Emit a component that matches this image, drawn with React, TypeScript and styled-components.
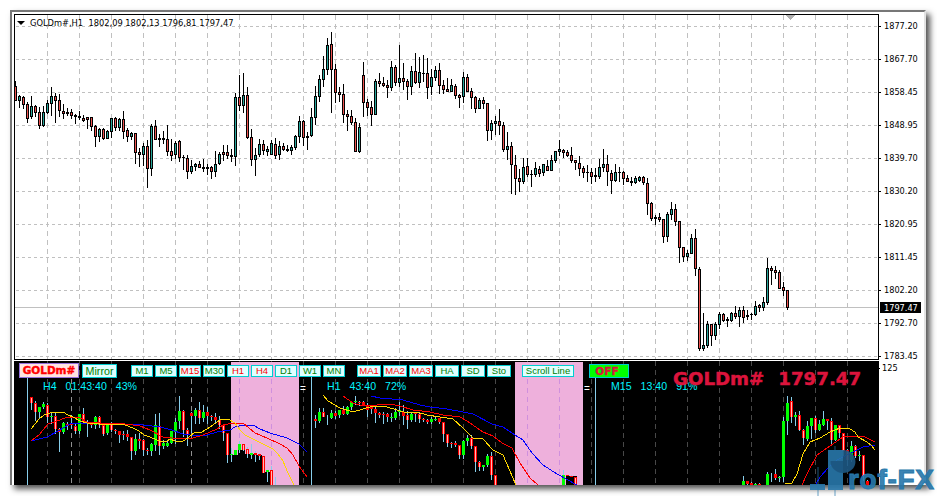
import React from "react";
import styled, { createGlobalStyle } from "styled-components";

const GlobalStyle = createGlobalStyle`
  html, body { margin: 0; padding: 0; background: #fff; overflow: hidden; }
  * { box-sizing: border-box; }
`;

/* Candle: [high, bodyTop, bodyBottom, low], rising candles carry a fifth value of 1. */
type Candle = number[];
type TimedCandle = [number, ...number[]];

const HOURLY: Candle[] = [
  [81,86,101,101],[95,96,101,108,1],[96,97,105,109],[102,104,119,123],[96,106,117,119,1],[105,106,113,117],[107,112,126,129],[106,112,126,127,1],
  [100,103,113,114,1],[87,96,104,116,1],[93,96,101,123],[94,100,111,117],[104,111,114,119],[108,112,114,116],[109,112,116,119],[114,115,117,124],
  [111,116,118,120],[115,118,121,122],[117,117,120,129],[117,117,127,131],[125,126,137,147],[128,129,137,142,1],[128,129,139,140],[130,131,139,139,1],
  [118,118,132,138,1],[117,118,128,131],[118,119,128,131,1],[111,119,132,139],[128,130,137,142],[132,133,137,140,1],[133,133,153,164],[148,152,155,167],
  [143,146,155,166,1],[140,146,169,188],[124,126,169,176,1],[120,126,140,140],[134,138,140,147],[131,138,140,144],[125,139,152,156],[139,151,156,161],
  [141,143,155,159,1],[140,141,158,162],[155,157,158,170],[155,158,172,179],[160,166,172,174,1],[163,164,167,171,1],[161,164,168,168],[159,167,169,172],
  [164,167,169,175],[166,167,172,179],[151,164,172,177,1],[152,154,164,165,1],[145,152,155,161],[145,152,156,159],[149,155,157,162],[93,97,157,166,1],
  [75,97,106,111],[73,95,106,113,1],[87,95,138,139],[129,137,160,166],[148,155,160,176,1],[139,144,155,157,1],[140,144,151,155],[146,149,152,156,1],
  [140,143,155,155,1],[138,144,156,159],[141,146,155,160,1],[143,146,150,151],[145,149,151,152],[145,147,151,155,1],[135,136,148,150,1],[116,121,137,143,1],
  [120,121,138,146],[132,136,138,150],[108,117,136,137,1],[86,96,118,125,1],[75,79,97,102,1],[56,69,80,87,1],[38,45,70,75,1],[32,44,70,113],
  [64,69,93,103],[87,92,95,102],[84,94,115,123],[110,114,117,131],[110,116,123,125],[118,122,152,152],[123,127,152,153,1],[62,75,103,117],
  [99,102,108,116],[101,107,115,126],[79,81,115,115,1],[73,81,84,87],[77,83,86,87],[80,85,88,98],[61,67,88,91,1],[65,67,83,86],
  [45,78,83,87,1],[63,78,82,90],[79,81,87,100],[66,71,87,95,1],[53,71,83,84],[57,72,83,88,1],[55,73,74,82],[58,73,88,99],
  [69,77,87,95,1],[66,70,78,81,1],[63,70,86,94],[80,85,90,94],[78,89,92,92],[79,85,92,92,1],[84,86,96,99],[94,95,98,108],
  [72,77,97,103,1],[74,77,92,92],[88,91,98,109],[96,97,109,113],[98,100,109,109,1],[97,100,104,109],[103,103,131,141],[120,123,131,140,1],
  [116,121,124,135,1],[109,121,126,135],[122,125,150,152],[132,146,150,160,1],[142,146,165,194],[155,165,179,195],[169,178,182,192],[158,167,182,184,1],
  [158,166,175,177],[170,174,175,187],[162,168,175,177,1],[166,169,174,177],[164,164,173,176,1],[160,166,171,171],[155,160,171,171,1],[151,151,161,163,1],
  [140,149,152,156,1],[149,150,153,158],[150,152,156,157],[147,155,161,163],[160,160,163,170],[156,163,169,176],[166,168,173,178],[165,172,173,182],
  [168,172,177,184],[168,175,177,182,1],[159,167,177,179,1],[149,164,168,172,1],[155,164,172,186],[170,173,181,194],[164,172,181,182,1],[167,172,173,182],
  [171,172,179,185],[175,178,182,182],[177,181,183,186],[176,178,183,184,1],[176,177,181,182,1],[176,177,183,185],[178,183,204,215],[202,203,219,221],
  [215,217,219,225],[213,217,220,222],[219,219,237,243],[212,214,237,242,1],[202,209,215,220,1],[204,209,222,226],[221,221,248,263],[247,247,257,262],
  [250,253,257,261,1],[234,238,254,254,1],[229,238,269,276],[267,269,349,351],[313,345,349,351,1],[321,324,346,348,1],[324,324,336,346],[322,324,336,340,1],
  [312,314,325,329,1],[313,314,321,322],[317,319,321,327],[312,313,321,322,1],[306,313,317,319],[307,310,317,327,1],[306,310,318,323],[310,315,317,320,1],
  [313,314,315,320],[301,306,315,316,1],[304,305,308,312],[297,302,308,311,1],[258,268,303,305,1],[266,268,271,285],[266,270,273,279],[270,272,289,289],
  [282,287,291,296],[290,290,308,310],
];

const SUB: TimedCandle[] = [
  [31,397,397,403,410],[35,401,403,412,421],[39,407,407,412,418,1],[43,402,404,407,409,1],[47,403,405,417,423],[51,413,416,417,424,1],[55,412,416,429,434],
  [59,428,429,432,452],[63,422,423,432,434,1],[67,422,424,426,430],[71,415,423,425,429],[75,424,426,431,434],[79,414,414,431,434,1],[83,408,414,422,424],
  [87,420,422,424,437],[91,423,424,425,428],[95,416,417,425,429,1],[99,416,417,425,428],[103,423,425,434,436],[107,423,424,433,435,1],[111,422,424,430,432],
  [115,429,430,431,434],[119,431,431,435,443],[123,431,434,435,440],[127,430,434,437,441],[131,437,437,451,460],[135,434,439,451,455,1],[139,433,439,441,449],
  [143,439,440,450,456],[147,448,450,451,455],[151,443,444,451,456,1],[155,414,425,445,451,1],[159,413,426,446,455],[163,440,443,446,449,1],[167,441,443,446,447,1],
  [171,431,431,443,444,1],[175,418,422,432,444,1],[179,396,411,421,429,1],[183,410,411,430,437],[187,428,430,435,446],[191,412,413,416,433],[195,408,410,416,424,1],
  [199,402,410,418,424],[203,405,412,418,422,1],[207,407,412,416,424],[211,415,416,417,421],[215,413,417,420,424],[219,416,420,425,429],[223,425,425,433,441],
  [227,433,433,455,463],[231,448,454,455,462,1],[235,450,450,455,455,1],[239,441,444,450,453,1],[243,444,444,450,451],[247,447,449,454,458],[251,444,453,455,459,1],
  [255,451,453,455,462],[259,453,454,456,460],[263,456,456,473,473],[267,470,470,472,482,1],[271,466,470,485,485],[275,477,485,485,485],
  [315,415,419,421,428],[319,408,412,421,423,1],[323,408,412,417,417],[327,415,417,417,425],[331,410,413,418,419,1],[335,411,413,416,419],[339,410,410,415,418,1],
  [343,406,410,414,415],[347,406,407,414,415,1],[351,401,402,407,410,1],[355,396,401,402,405,1],[359,401,402,403,406],[363,401,402,406,406],[367,403,406,410,417],
  [371,407,407,409,414],[375,407,409,413,423],[379,412,413,415,418],[383,412,414,415,424],[387,413,414,417,422],[391,413,417,418,422,1],[395,408,412,418,420,1],
  [399,402,410,412,416,1],[403,405,412,416,425],[407,411,415,420,429],[411,413,414,420,422,1],[415,412,412,414,422],[419,413,414,419,423],[423,418,419,420,422],
  [427,419,420,422,424],[431,417,419,422,424,1],[435,416,419,420,421,1],[439,418,418,422,424],[443,422,422,434,442],[447,434,434,443,447],[451,442,443,444,448],
  [455,441,443,445,447],[459,445,445,455,459],[463,440,441,455,459,1],[467,435,438,441,446,1],[471,435,438,446,449],[475,446,446,462,472],[479,461,462,467,471],
  [483,465,465,467,471,1],[487,454,456,465,467,1],[491,452,456,475,480],[495,475,475,485,485],
  [563,470,475,485,485,1],[567,475,475,476,476],[571,475,476,477,477],[575,477,477,485,485],
  [743,476,481,485,485,1],[747,481,481,484,485],[751,482,483,485,485],[755,483,484,485,485,1],[759,483,484,485,485],
  [767,472,474,485,485,1],[771,473,474,474,482],[775,469,474,478,480],[779,476,477,478,482,1],[783,417,421,477,482,1],[787,396,403,421,435,1],[791,397,401,417,423],
  [795,412,415,417,426,1],[799,411,415,430,431],[803,429,430,438,445],[807,421,426,439,441,1],[811,418,418,426,439,1],[815,416,418,430,433],[819,420,424,430,431,1],
  [823,411,419,425,426,1],[827,419,419,421,430],[831,418,421,440,446],[835,425,425,440,441,1],[839,425,425,433,438],[843,433,433,451,457],[847,449,450,460,466],
  [851,441,446,460,462,1],[855,445,446,456,458],[859,451,455,456,461,1],[863,455,455,476,481],[867,480,481,485,485],
];

const LINES: { color: string; points: string }[] = [
  { color: "#0000ff", points: "31,441 47,437 60,430 70,424 80,423 123,424 143,425 160,427 172,430 183,434 197,436 207,435 217,432 230,430 235,427 243,425 253,425 260,429 270,433 287,438 299,444 303,448 307,452" },
  { color: "#ff0000", points: "31,441 39,435 48,424 57,421 65,418 73,417 80,418 87,422 100,423 125,424 140,426 150,430 163,437 172,438 193,438 203,435 217,429 223,425 233,423 243,423 255,433 267,438 280,444 287,448 293,455 299,466 307,477" },
  { color: "#ffd700", points: "31,429 39,419 44,415 50,413 57,412 63,412 68,415 73,417 80,421 87,423 100,424 113,424 125,425 133,428 139,431 144,435 150,437 157,440 163,442 167,441 170,439 175,441 183,441 188,438 195,432 202,432 210,427 220,420 228,419 235,423 240,430 245,435 253,439 263,444 273,449 278,454 283,461 288,473 294,485" },
  { color: "#0000ff", points: "371,396 380,398 403,400 420,405 430,407 447,409 463,412 473,414 492,424 503,427 515,435 523,440 532,453 543,465 557,474 577,485" },
  { color: "#ff0000", points: "343,396 353,403 363,406 377,405 390,404 400,406 413,410 430,412 443,415 460,417 467,421 483,432 493,436 502,443 512,448 520,463 530,478 538,485" },
  { color: "#ffd700", points: "323,395 328,401 340,408 353,412 363,409 373,406 387,407 397,410 407,413 417,412 427,415 440,417 453,419 463,428 473,438 483,439 493,450 503,455 516,485" },
  { color: "#0000ff", points: "816,484 820,477 828,468 837,460 847,455 857,450 863,447 875,445" },
  { color: "#ff0000", points: "802,485 807,474 817,455 830,446 843,437 850,436 863,436 875,442" },
  { color: "#ffd700", points: "785,484 792,483 797,474 803,454 810,442 820,438 830,432 840,428 850,429 855,432 858,437 867,442 872,446 875,450" },
];

const COLUMNS = Array.from({ length: 26 }, (_, i) => 47 + i * 32);
const PRICES = ["1877.20","1867.70","1858.45","1848.95","1839.70","1830.20","1820.95","1811.45","1802.20","1792.70","1783.45"];

const Page = styled.main`
  width: 937px;
  height: 496px;
  padding: 10px 0 0 10px;
  background: #fff;
  position: relative;
`;
const Frame = styled.section`
  width: 916px;
  height: 475px;
  padding: 2px 0 0 2px;
  display: grid;
  grid-template-columns: 867px 1fr;
  border-top: 2px solid #777;
  border-left: 2px solid #777;
  border-right: 2px solid #e3e3e3;
  box-shadow: 4px 4px 6px 0 rgba(0, 0, 0, 0.68);
  background: #fff;
`;
const Charts = styled.div`
  display: grid;
  grid-template-rows: 347px 124px;
  width: 867px;
`;
const Pane = styled.div`
  position: relative;
  overflow: hidden;
`;
const Plot = styled.svg`
  display: block;
  shape-rendering: crispEdges;
`;
const Heading = styled.div`
  position: absolute;
  top: 3px;
  left: 3px;
  display: flex;
  align-items: center;
  gap: 5px;
  height: 12px;
  color: #000;
  font: 9.22px/12px "DejaVu Sans Condensed", "DejaVu Sans", sans-serif;
  font-stretch: condensed;
  white-space: pre;
`;
const Caret = styled.i`
  border: 4px solid transparent;
  border-top-color: #000;
  border-bottom: 0;
`;
const Axis = styled.aside`
  display: flex;
  flex-direction: column;
  padding: 6px 0 0 3px;
  color: #000;
  font: 9.1px/13px "DejaVu Sans Condensed", "DejaVu Sans", sans-serif;
  font-stretch: condensed;
`;
const Tick = styled.div`
  height: 33px;
`;
const LastTick = styled(Tick)`
  height: 12px;
`;
const ScaleTick = styled(Tick)`
  margin-left: -2px;
`;
const Current = styled.div`
  position: absolute;
  left: 880px;
  top: 302px;
  width: 41px;
  height: 11px;
  padding-left: 4px;
  background: #000;
  color: #fff;
  font: 9.1px/12px "DejaVu Sans Condensed", "DejaVu Sans", sans-serif;
  font-stretch: condensed;
`;
const Toolbar = styled.div`
  position: absolute;
  top: 2px;
  left: 5px;
  display: flex;
  align-items: center;
  height: 15px;
`;
const Button = styled.button<{ $w: number; $gap?: number; $on?: boolean }>`
  width: ${(p) => p.$w}px;
  height: 12px;
  margin: 0 0 0 ${(p) => p.$gap ?? 2}px;
  padding: 0;
  border: 1px solid #00ced1;
  background: #e0ffff;
  color: ${(p) => (p.$on ? "#ff0000" : "#008000")};
  font: 9.5px/10px "Liberation Sans", Arial, sans-serif;
  white-space: nowrap;
`;
const MirrorButton = styled(Button)`
  height: 14px;
  font-size: 10.7px;
  line-height: 12px;
`;
const SymbolButton = styled(Button)`
  height: 15px;
  border-color: #9370db;
  background: #ffe4e1;
  color: #ff0000;
  font: bold 10.5px/13px "DejaVu Sans", Verdana, sans-serif;
  -webkit-text-stroke: 0.4px currentColor;
`;
const PowerButton = styled(SymbolButton)`
  height: 14px;
  border-color: #00ced1;
  background: #00ff00;
  color: #dc143c;
  line-height: 12px;
  padding-right: 4px;
`;
const Status = styled.div<{ $x: number }>`
  position: absolute;
  top: 19px;
  left: ${(p) => p.$x}px;
  display: flex;
  gap: 9px;
  color: #00f5ff;
  font: 10.6px/12px "Liberation Sans", Arial, sans-serif;
`;
const Equals = styled.span<{ $x: number }>`
  position: absolute;
  top: 22px;
  left: ${(p) => p.$x}px;
  color: #fff;
  font: 10px/12px "Liberation Sans", Arial, sans-serif;
`;
const Ticker = styled.div`
  position: absolute;
  left: 659px;
  top: 7px;
  display: flex;
  gap: 14px;
  color: #dc143c;
  font: bold 18.2px/22px "DejaVu Sans", Verdana, sans-serif;
  -webkit-text-stroke: 0.5px currentColor;
`;
const Brand = styled.svg`
  position: absolute;
  left: 800px;
  top: 436px;
`;

const FRAMES: { label: string; w: number; gap?: number; on?: boolean }[] = [
  { label: "M1", w: 22, gap: 14 }, { label: "M5", w: 22 }, { label: "M15", w: 22, on: true }, { label: "M30", w: 22 },
  { label: "H1", w: 22, on: true }, { label: "H4", w: 22, on: true }, { label: "D1", w: 22 }, { label: "W1", w: 22 }, { label: "MN", w: 22 },
  { label: "MA1", w: 24, gap: 12, on: true }, { label: "MA2", w: 24, on: true }, { label: "MA3", w: 24, on: true },
  { label: "HA", w: 24 }, { label: "SD", w: 24 }, { label: "Sto", w: 24 }, { label: "Scroll Line", w: 52, gap: 11 },
];

function PriceChart() {
  return (
    <Plot width="867" height="347" viewBox="14 14 867 347">
      {COLUMNS.map((x) => (
        <path key={x} d={`M${x + 0.5} 15V359`} stroke="#c0c0c0" strokeDasharray="5 4" />
      ))}
      {PRICES.map((p, i) => (
        <path key={p} d={`M16 ${26.5 + i * 33}H878`} stroke="#c0c0c0" strokeDasharray="3 3" />
      ))}
      <path d="M15 307.5H878" stroke="#c0c0c0" />
      <path d="M785 15h10l-5 5z" fill="#b0b0b0" />
      {HOURLY.map(([high, top, bottom, low, up], i) => {
        const x = 15 + i * 4;
        return (
          <g key={i}>
            <rect x={x} y={high} width="1" height={low - high} />
            <rect x={x - 1} y={top} width="3" height={bottom - top} />
            {bottom - top > 2 && (
              <rect x={x} y={top + 1} width="1" height={bottom - top - 2} fill={up ? "#26a69a" : "#ef5350"} />
            )}
          </g>
        );
      })}
      <path d="M14.5 14V360M14 14.5H879M878.5 14V360M14 359.5H879" stroke="#000" fill="none" />
      {PRICES.map((p, i) => (
        <path key={p} d={`M879 ${26.5 + i * 33}h2`} stroke="#000" />
      ))}
    </Plot>
  );
}

function IndicatorChart() {
  return (
    <Plot width="867" height="124" viewBox="14 361 867 124">
      <rect x="14" y="361" width="865" height="124" />
      {COLUMNS.map((x) => (
        <path key={x} d={`M${x + 0.5} 361V485`} stroke="#484848" strokeDasharray="5 4" />
      ))}
      <path d="M71.5 379V485M191.5 379V485" stroke="#909090" strokeDasharray="5 4" />
      <path d="M231 362h68v123h-68zM515 362h68v123h-68z" fill="#eeb0dc" />
      <path d="M239.5 379V485M271.5 379V485M527.5 379V485M559.5 379V485" stroke="#cf90dd" strokeDasharray="5 4" />
      <path d="M231 455h7v-5h7v4h9v1h8v17h8v13h-39zM566 476h11v9h-11z" fill="#000" />
      <path d="M27.5 378V485M311.5 377V485M595.5 378V485" stroke="#87ceeb" />
      {SUB.map(([x, high, top, bottom, low, up]) => (
        <g key={x}>
          <rect x={x - 1} y={top} width="3" height={bottom - top} fill={up ? "#00ff00" : "#ff0000"} />
          <rect x={x} y={high} width="1" height={top - high} fill="#87ceeb" />
          <rect x={x} y={bottom} width="1" height={low - bottom} fill="#87ceeb" />
          {!up && bottom - top > 4 && (
            <rect x={x} y={top + 1} width="1" height={bottom - top - 1} fill="#ffb8b8" />
          )}
        </g>
      ))}
      {LINES.map((l, i) => (
        <polyline key={i} points={l.points} fill="none" stroke={l.color} />
      ))}
      <path d="M879 368.5h1" stroke="#000" />
    </Plot>
  );
}

export default function App() {
  return (
    <>
      <GlobalStyle />
      <Page>
        <Frame>
          <Charts>
            <Pane>
              <PriceChart />
              <Heading>
                <Caret />
                <span>GOLDm#,H1  1802,09 1802,13 1796,81 1797,47</span>
              </Heading>
            </Pane>
            <Pane>
              <IndicatorChart />
              <Toolbar>
                <SymbolButton $w={60} $gap={0}>GOLDm#</SymbolButton>
                <MirrorButton $w={35} $gap={3}>Mirror</MirrorButton>
                {FRAMES.map((f) => (
                  <Button key={f.label} $w={f.w} $gap={f.gap} $on={f.on}>{f.label}</Button>
                ))}
                <PowerButton $w={40} $gap={15}>OFF</PowerButton>
              </Toolbar>
              <Status $x={29}><span>H4</span><span>01:43:40</span><span>43%</span></Status>
              <Status $x={313}><span>H1</span><span>43:40</span><span>72%</span></Status>
              <Status $x={597}><span>M15</span><span>13:40</span><span>91%</span></Status>
              <Equals $x={286}>=</Equals>
              <Equals $x={570}>=</Equals>
              <Ticker><span>GOLDm#</span><span>1797.47</span></Ticker>
            </Pane>
          </Charts>
          <Axis>
            {PRICES.map((p, i) => (
              i === PRICES.length - 1 ? <LastTick key={p}>{p}</LastTick> : <Tick key={p}>{p}</Tick>
            ))}
            <ScaleTick>125</ScaleTick>
          </Axis>
        </Frame>
        <Current>1797.47</Current>
        <Brand width="137" height="60" viewBox="800 436 137 60">
          <g fill="#2878ab" fillOpacity="0.9">
            <path d="M828 450h15v40h-15z" />
            <path d="M810 484h15v6h-15z" />
            <path d="M817 467h2v29h-2zM834 446h2v4h-2zM834 490h2v6h-2z" fillOpacity="0.35" />
          </g>
          <path d="M843 461V450a12.5 11.5 0 1 1-12.5 11z" fill="#1c5680" fillOpacity="0.92" />
          <text x="848" y="489" textLength="86" fill="#2878ab" fillOpacity="0.92" stroke="#2878ab" strokeWidth="1" fontFamily="Liberation Sans, Arial, sans-serif" fontWeight="bold" fontSize="28">rof-FX</text>
        </Brand>
      </Page>
    </>
  );
}
